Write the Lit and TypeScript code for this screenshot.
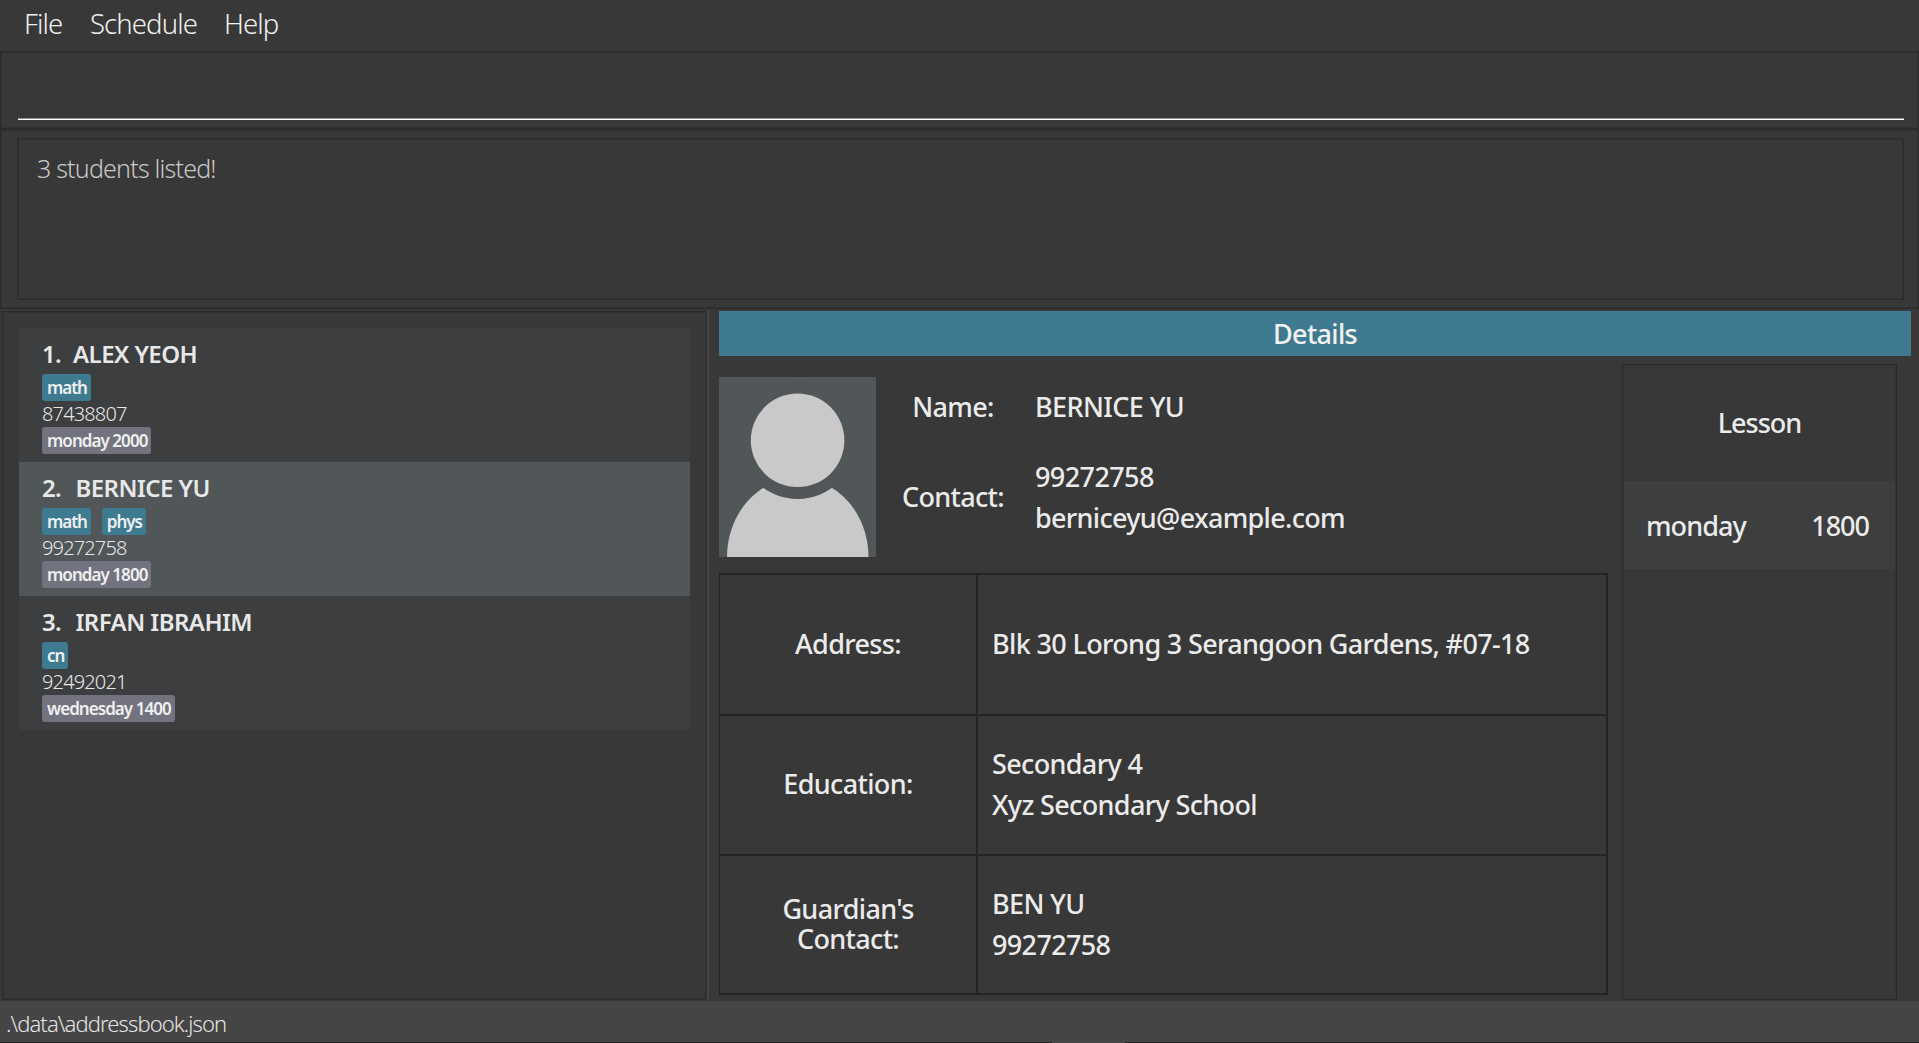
import { LitElement, html, css, svg } from "lit";
import { classMap } from "lit/directives/class-map.js";

interface Student {
  name: string;
  phone: string;
  subjects: string[];
  lesson: string;
}

const STUDENTS: Student[] = [
  { name: "ALEX YEOH", phone: "87438807", subjects: ["math"], lesson: "monday 2000" },
  { name: "BERNICE YU", phone: "99272758", subjects: ["math", "phys"], lesson: "monday 1800" },
  { name: "IRFAN IBRAHIM", phone: "92492021", subjects: ["cn"], lesson: "wednesday 1400" },
];

const DETAILS = [
  { label: "Address:", values: ["Blk 30 Lorong 3 Serangoon Gardens, #07-18"] },
  { label: "Education:", values: ["Secondary 4", "Xyz Secondary School"] },
  { label: "Guardian's\nContact:", values: ["BEN YU", "99272758"] },
];

class StudentList extends LitElement {
  static styles = css`
    :host { display: block; }
    .card { height: 134px; box-sizing: border-box; padding: 6px 0 0 23px; background: #3c3e3f; color: #e8e8e8; }
    .selected { background: #515658; }
    .name { display: flex; height: 40px; line-height: 40px; font-size: 24px; font-weight: 560; letter-spacing: -0.55px; white-space: pre; }
    .index { width: 31px; letter-spacing: -0.8px; }
    .index.wide { width: 33.5px; }
    .tags { display: flex; gap: 11px; height: 27px; }
    .tag { height: 27px; line-height: 27px; padding: 0 4px 0 5px; border-radius: 3px; background: #3e7b91; color: #efefef; font-size: 17px; font-weight: 560; letter-spacing: -1.05px; white-space: pre; }
    .slot { background: #737380; letter-spacing: -0.95px; }
    .phone { height: 26px; line-height: 26px; font-size: 20px; font-weight: 360; letter-spacing: -0.85px; }
  `;
  render() {
    return html`${STUDENTS.map((s, i) => html`
      <div class=${classMap({ card: true, selected: i === 1 })}>
        <div class="name"><span class=${classMap({ index: true, wide: i > 0 })}>${i + 1}.</span><span>${s.name}</span></div>
        <div class="tags">${s.subjects.map((t) => html`<span class="tag">${t}</span>`)}</div>
        <div class="phone">${s.phone}</div>
        <div class="tags"><span class="tag slot">${s.lesson}</span></div>
      </div>`)}`;
  }
}
customElements.define("student-list", StudentList);

const avatar = svg`
  <rect width="157" height="180" fill="#515658"/>
  <path d="M8 180A70.7 79 0 0 1 149.500 180Z" fill="#c9c9c9"/>
  <circle cx="78.600" cy="63.300" r="58.700" fill="#515658"/>
  <circle cx="78.600" cy="63.300" r="46.800" fill="#c9c9c9"/>`;

class StudentDetails extends LitElement {
  static styles = css`
    :host { display: flex; flex-direction: column; font-size: 27px; font-weight: 500; letter-spacing: -0.69px; color: #ebebeb; }
    .title { height: 45px; line-height: 46px; text-align: center; background: #3f7a90; color: #f2f2f2; }
    .body { flex: 1; display: flex; padding-right: 14px; }
    .main { width: 889px; }
    .profile { display: flex; height: 217px; }
    .avatar { display: block; width: 157px; height: 180px; margin-top: 21px; }
    .facts { display: grid; grid-template-columns: 154px 1fr; grid-template-rows: 100px 81px; align-items: center; }
    .label { text-align: center; }
    .facts .values { padding-left: 5px; }
    .values div { line-height: 41px; white-space: pre; }
    .values .caps { letter-spacing: -0.6px; }
    .number { letter-spacing: -0.6px; }
    .table { height: 422px; box-sizing: border-box; display: grid; grid-template-columns: 256px 1fr; grid-template-rows: 139px 138px 137px; gap: 2px; padding: 2px 2px 2px 1px; background: #242424; }
    .cell { background: #383838; display: flex; flex-direction: column; justify-content: center; padding-bottom: 2px; box-sizing: border-box; }
    .cell.label { line-height: 30px; white-space: pre-line; letter-spacing: -0.65px; }
    .cell.values { padding-left: 14px; letter-spacing: -0.65px; }
    .lessons { width: 275px; box-sizing: border-box; margin: 8px 0 0 14px; height: 636px; border: 1px solid #2a2a2a; box-shadow: inset 0 0 0 1px #343434; text-align: center; }
    .heading { height: 116px; line-height: 116px; letter-spacing: -1px; }
    .lesson { display: flex; justify-content: space-between; height: 88px; line-height: 90px; margin: 0 1px; padding: 0 26px 0 22px; background: #3c3e3f; letter-spacing: -0.95px; }
    .time { letter-spacing: -1px; }
  `;
  render() {
    return html`
      <div class="title">Details</div>
      <div class="body">
        <div class="main">
          <div class="profile">
            <svg class="avatar" viewBox="0 0 157 180">${avatar}</svg>
            <div class="facts">
              <div class="label">Name:</div><div class="values"><div class="caps">BERNICE YU</div></div>
              <div class="label">Contact:</div><div class="values"><div class="number">99272758</div><div>berniceyu@example.com</div></div>
            </div>
          </div>
          <div class="table">${DETAILS.map((d) => html`
            <div class="cell label">${d.label}</div>
            <div class="cell values">${d.values.map((v) => html`<div>${v}</div>`)}</div>`)}
          </div>
        </div>
        <div class="lessons">
          <div class="heading">Lesson</div>
          <div class="lesson"><span>monday</span><span class="time">1800</span></div>
        </div>
      </div>`;
  }
}
customElements.define("student-details", StudentDetails);

class AppRoot extends LitElement {
  static styles = css`
    :host { display: flex; flex-direction: column; width: 1919px; height: 1043px; overflow: hidden; background: #383838; font-family: "Noto Sans", "Open Sans", sans-serif; }
    .menu { display: flex; height: 51px; line-height: 48px; padding-left: 24px; box-sizing: border-box; font-size: 27.5px; font-weight: 300; letter-spacing: -0.9px; color: #f0f0f0; }
    .file { width: 66px; }
    .schedule { width: 134px; }
    .pane { box-sizing: border-box; border: 1px solid #2b2b2b; box-shadow: inset 0 0 0 1px #323232; }
    .command { height: 78px; padding: 66px 14px 0 17px; }
    .line { height: 2px; background: linear-gradient(#8f8f8f 50%, #ffffff 50%); }
    .result { height: 180px; padding: 8px 14px 0 16px; }
    .message { height: 162px; padding: 10px 0 0 19px; line-height: 38px; font-size: 25px; font-weight: 350; letter-spacing: -0.8px; color: #c8c8c8; }
    .split { display: flex; height: 692px; }
    .students { width: 705px; height: 689px; margin: 2px 0 0 2px; padding: 16px 16px 0 16px; }
    .divider { width: 2px; height: 689px; margin-top: 2px; background: linear-gradient(90deg, #4c4c4c 50%, #404040 50%); }
    .details { width: 1192px; margin: 2px 0 0 10px; }
    .status { height: 41px; line-height: 44px; padding-left: 6px; background: #454545; color: #e4e4e4; font-size: 22px; font-weight: 300; letter-spacing: -0.9px; }
    .edge { display: flex; flex: 1; background: #222; padding-left: 1052px; }
    .thumb { width: 73px; background: #4a4a4a; }
  `;
  render() {
    return html`
      <div class="menu"><span class="file">File</span><span class="schedule">Schedule</span><span>Help</span></div>
      <div class="pane command"><div class="line"></div></div>
      <div class="pane result"><div class="pane message">3 students listed!</div></div>
      <div class="split">
        <div class="pane students"><student-list></student-list></div>
        <div class="divider"></div>
        <student-details class="details"></student-details>
      </div>
      <div class="status">.\\data\\addressbook.json</div>
      <div class="edge"><div class="thumb"></div></div>`;
  }
}
customElements.define("app-root", AppRoot);
